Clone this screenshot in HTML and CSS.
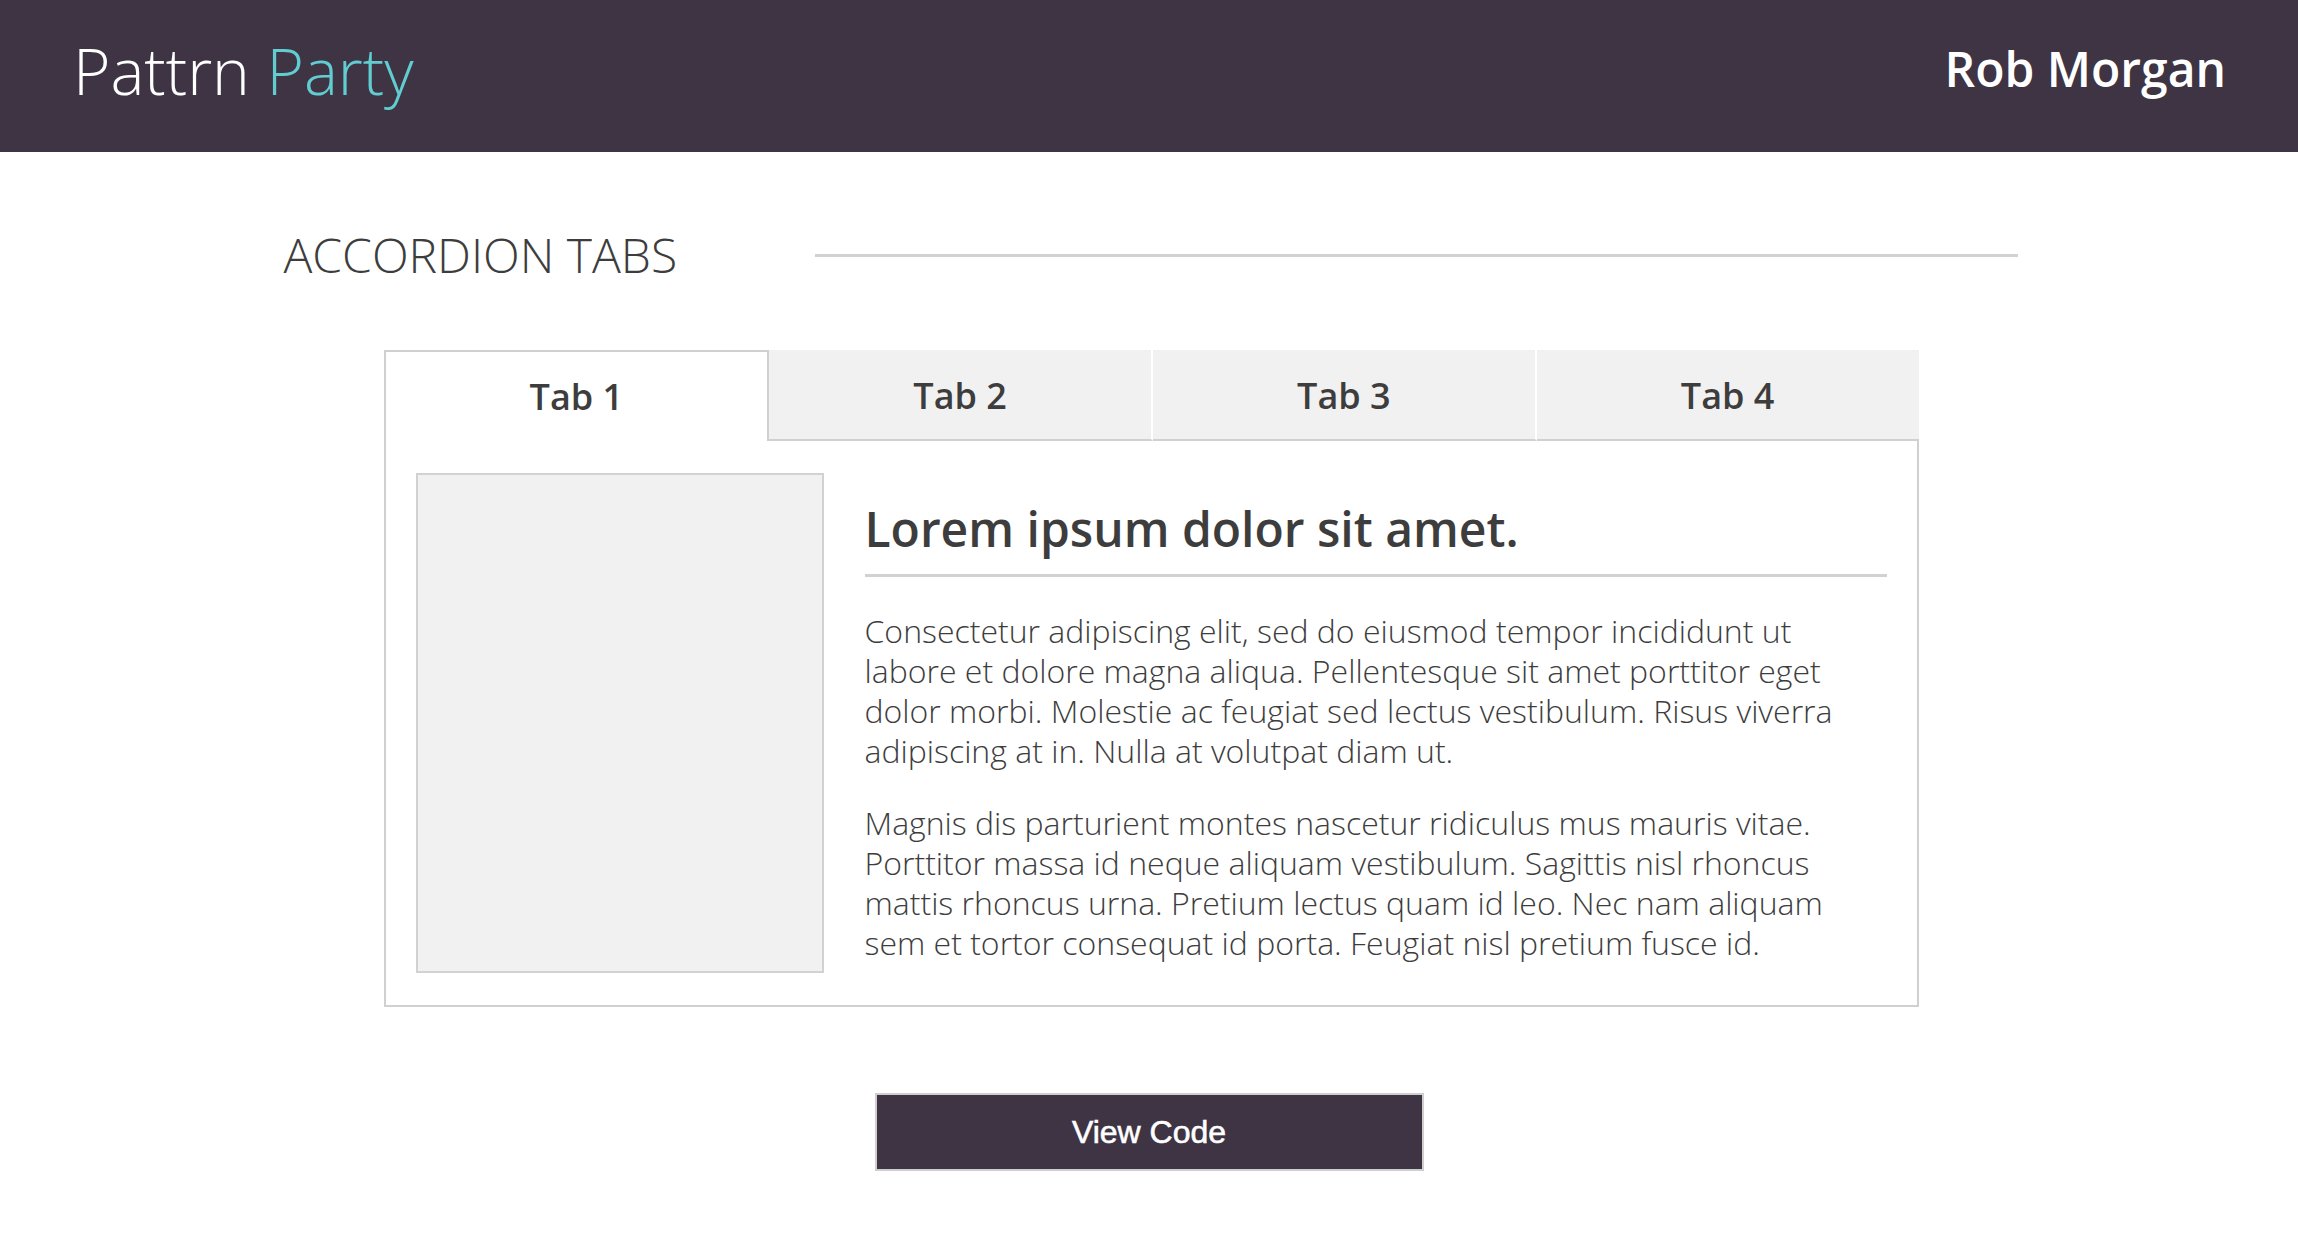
FILE: index.html
```html
<!DOCTYPE html>
<html lang="en">
<head>
<meta charset="utf-8">
<title>Pattrn Party — Accordion Tabs</title>
<link rel="stylesheet" href="styles.css">
</head>
<body>
<header class="topbar">
  <div class="logo">Pattrn <span class="logo-accent">Party</span></div>
  <div class="user">Rob Morgan</div>
</header>
<main class="page">
  <div class="section-head">
    <h1 class="section-title">ACCORDION TABS</h1>
    <div class="section-rule"></div>
  </div>
  <div class="tabs">
    <div class="tab-list">
      <div class="tab tab-active">Tab 1</div>
      <div class="tab">Tab 2</div>
      <div class="tab">Tab 3</div>
      <div class="tab">Tab 4</div>
    </div>
    <div class="tab-panel">
      <div class="media"></div>
      <div class="copy">
        <h2 class="copy-title">Lorem ipsum dolor sit amet.</h2>
        <p class="copy-text">Consectetur adipiscing elit, sed do eiusmod tempor incididunt ut labore et dolore magna aliqua. Pellentesque sit amet porttitor eget dolor morbi. Molestie ac feugiat sed lectus vestibulum. Risus viverra adipiscing at in. Nulla at volutpat diam ut.</p>
        <p class="copy-text">Magnis dis parturient montes nascetur ridiculus mus mauris vitae. Porttitor massa id neque aliquam vestibulum. Sagittis nisl rhoncus mattis rhoncus urna. Pretium lectus quam id leo. Nec nam aliquam sem et tortor consequat id porta. Feugiat nisl pretium fusce id.</p>
      </div>
    </div>
  </div>
  <div class="actions">
    <button class="btn-code">View Code</button>
  </div>
</main>
</body>
</html>
```

FILE: styles.css
```css
* { box-sizing: border-box; }
body {
  margin: 0;
  font-family: "Open Sans", "Noto Sans", sans-serif;
  color: #3d3d3d;
  background: #fff;
}
.topbar {
  height: 152px;
  background: #3e3444;
  display: flex;
  align-items: center;
  justify-content: space-between;
  padding: 0 72px 0 73px;
}
.logo {
  font-size: 64px;
  font-weight: 300;
  color: #fff;
  line-height: 1;
  margin-top: -10px;
}
.logo-accent { color: #62cdd1; }
.user {
  font-size: 48px;
  font-weight: 600;
  color: #fff;
  line-height: 1;
  margin-top: -14px;
}
.page {
  width: 1737px;
  margin: 0 auto;
  padding-top: 74px;
}
.section-head {
  display: flex;
  align-items: center;
  gap: 138px;
}
.section-title {
  margin: 0 0 0 3px;
  font-size: 48px;
  font-weight: 300;
  line-height: 58px;
  color: #3d3d3d;
  white-space: nowrap;
}
.section-rule {
  flex: 1;
  height: 3px;
  background: #d2d2d2;
}
.tabs {
  width: 1535px;
  margin: 66px 0 0 103px;
}
.tab-list {
  display: flex;
}
.tab {
  flex: 1;
  height: 91px;
  display: flex;
  align-items: center;
  justify-content: center;
  padding-top: 2px;
  font-size: 36px;
  font-weight: 600;
  color: #3d3d3d;
  background: #f1f1f1;
  border-bottom: 2px solid #d0d0d0;
  border-right: 2px solid #fff;
}
.tab:last-child { border-right: none; }
.tab-active {
  background: #fff;
  border: 2px solid #d0d0d0;
  border-bottom: none;
  padding-top: 0;
}
.tab-panel {
  display: flex;
  gap: 41px;
  border: 2px solid #d0d0d0;
  border-top: none;
  padding: 32px 30px 32px 30px;
}
.media {
  flex: 0 0 408px;
  height: 500px;
  background: #f1f1f1;
  border: 2px solid #d2d2d2;
}
.copy {
  flex: 1;
}
.copy-title {
  margin: 26px 0 0;
  font-size: 48px;
  font-weight: 600;
  line-height: 60px;
  color: #3d3d3d;
  padding-bottom: 15px;
  border-bottom: 3px solid #d2d2d2;
}
.copy-text {
  margin: 34px 0 0;
  font-size: 32px;
  font-weight: 300;
  line-height: 40px;
  color: #3d3d3d;
}
.copy-text + .copy-text { margin-top: 32px; }
.actions {
  display: flex;
  justify-content: center;
  margin-top: 86px;
}
.btn-code {
  width: 549px;
  height: 78px;
  background: #3e3444;
  border: 2px solid #cfcfcf;
  color: #fff;
  font-family: "Liberation Sans", Arial, sans-serif;
  font-size: 32px;
  -webkit-text-stroke: 0.6px #fff;
  padding: 0;
  cursor: pointer;
}
```
